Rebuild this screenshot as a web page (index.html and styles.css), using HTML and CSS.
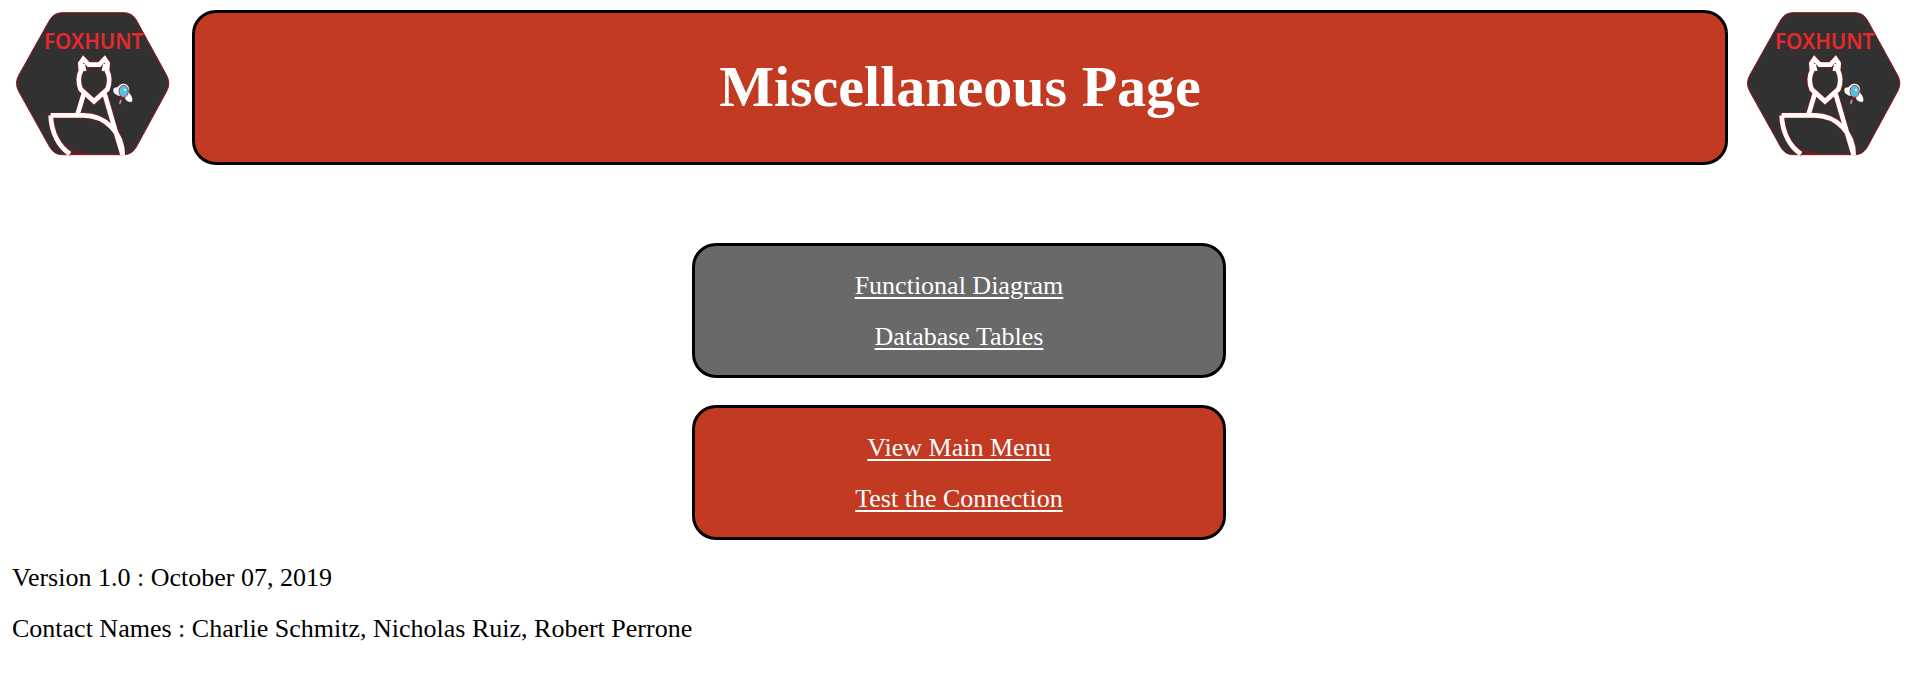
FILE: index.html
```
<!DOCTYPE html>
<html lang="en">
<head>
<meta charset="utf-8">
<title>Miscellaneous Page</title>
<link rel="stylesheet" href="styles.css">
</head>
<body>
<header class="header">
  <svg class="logo" viewBox="39 30 477 465" role="img" aria-label="Foxhunt">
    <path class="badge" d="M186 38H372Q396 38 409 60L500 226Q513 250 500 274L409 441Q396 464 372 464H186Q162 464 149 441L56 274Q43 250 56 226L149 60Q162 38 186 38Z"/>
    <g class="edge">
      <path d="M251 282L233 342M314 282L352 412L368 463M152 346H250C318 346 368 400 368 463M152 346C154 400 178 442 212 461"/>
      <path d="M250 178L241 190L243 212Q230 238 242 268L282 304L322 268Q334 238 321 212L323 190L314 178L298 194H266Z"/>
    </g>
    <g class="fox">
      <path d="M251 282L233 342M314 282L352 412L368 465M152 346H250C318 346 368 400 368 465M152 346C154 400 178 442 210 462"/>
      <path d="M250 177L241 190L243 212Q230 238 242 268L282 304L322 268Q334 238 321 212L323 190L314 177L298 194H266Z"/>
    </g>
    <path class="tail" d="M208 447Q232 462 266 463"/>
    <path class="ear" d="M250 192L255 213M314 192L309 213"/>
    <path class="moth" d="M371 250C358 250 356 260 351 261C337 259 335 276 345 283C355 291 362 288 373 290C374 303 387 309 397 306C400 298 398 289 388 278C391 261 384 252 371 250Z"/>
    <path class="handle" d="M366 291L358 315"/>
    <path class="grip" d="M363 300L359 311"/>
    <ellipse class="lens" cx="371" cy="274" rx="14" ry="18"/>
    <circle class="shine" cx="375" cy="270" r="4"/>
    <text class="wordmark" x="281" y="148" text-anchor="middle">FOXHUNT</text>
  </svg>
  <h1 class="banner">Miscellaneous Page</h1>
  <svg class="logo" viewBox="39 30 477 465" role="img" aria-label="Foxhunt">
    <path class="badge" d="M186 38H372Q396 38 409 60L500 226Q513 250 500 274L409 441Q396 464 372 464H186Q162 464 149 441L56 274Q43 250 56 226L149 60Q162 38 186 38Z"/>
    <g class="edge">
      <path d="M251 282L233 342M314 282L352 412L368 463M152 346H250C318 346 368 400 368 463M152 346C154 400 178 442 212 461"/>
      <path d="M250 178L241 190L243 212Q230 238 242 268L282 304L322 268Q334 238 321 212L323 190L314 178L298 194H266Z"/>
    </g>
    <g class="fox">
      <path d="M251 282L233 342M314 282L352 412L368 465M152 346H250C318 346 368 400 368 465M152 346C154 400 178 442 210 462"/>
      <path d="M250 177L241 190L243 212Q230 238 242 268L282 304L322 268Q334 238 321 212L323 190L314 177L298 194H266Z"/>
    </g>
    <path class="tail" d="M208 447Q232 462 266 463"/>
    <path class="ear" d="M250 192L255 213M314 192L309 213"/>
    <path class="moth" d="M371 250C358 250 356 260 351 261C337 259 335 276 345 283C355 291 362 288 373 290C374 303 387 309 397 306C400 298 398 289 388 278C391 261 384 252 371 250Z"/>
    <path class="handle" d="M366 291L358 315"/>
    <path class="grip" d="M363 300L359 311"/>
    <ellipse class="lens" cx="371" cy="274" rx="14" ry="18"/>
    <circle class="shine" cx="375" cy="270" r="4"/>
    <text class="wordmark" x="281" y="148" text-anchor="middle">FOXHUNT</text>
  </svg>
</header>
<main class="menus">
  <nav class="panel panel-gray" aria-label="Documents">
    <a href="#diagram">Functional Diagram</a>
    <a href="#tables">Database Tables</a>
  </nav>
  <nav class="panel panel-red" aria-label="Navigation">
    <a href="#menu">View Main Menu</a>
    <a href="#test">Test the Connection</a>
  </nav>
</main>
<footer class="footer">
  <p>Version 1.0 : October 07, 2019</p>
  <p>Contact Names : Charlie Schmitz, Nicholas Ruiz, Robert Perrone</p>
</footer>
</body>
</html>
```
FILE: styles.css
```
* { box-sizing: border-box; }
body {
  margin: 0;
  background: #fff;
  color: #000;
  font-family: "Liberation Serif", serif;
  font-size: 26px;
  line-height: 27px;
}
.header {
  display: flex;
  align-items: center;
  padding: 10px 15px 0 13px;
}
.logo {
  flex: none;
  width: 159px;
  height: 155px;
}
.banner {
  flex: 1;
  margin: 0 16px 0 20px;
  padding: 46px 16px 47px;
  border: 3px solid #000;
  border-radius: 24px;
  background: #c33a23;
  color: #fff;
  font-size: 58px;
  line-height: 56px;
  text-align: center;
}
.menus {
  display: flex;
  flex-direction: column;
  align-items: center;
  gap: 27px;
  padding-top: 78px;
}
.panel {
  display: flex;
  flex-direction: column;
  align-items: center;
  gap: 24px;
  width: 534px;
  max-width: 100%;
  padding: 26px 16px 25px;
  border: 3px solid #000;
  border-radius: 24px;
}
.panel-gray { background: #696969; }
.panel-red { background: #c33a23; }
.panel a {
  color: #fff;
  text-decoration-thickness: 2px;
  text-underline-offset: 3px;
}
.footer {
  display: flex;
  flex-direction: column;
  gap: 24px;
  padding: 24px 12px;
}
.footer p { margin: 0; }
.badge { fill: #313131; stroke: #9c1216; stroke-width: 3; }
.edge { fill: none; stroke: #9c1216; stroke-width: 18; }
.fox { fill: none; stroke: #fff; stroke-width: 14; }
.tail { fill: none; stroke: #9c1216; stroke-width: 3; }
.ear { fill: none; stroke: #fff; stroke-width: 9; }
.moth { fill: #fff; stroke: #161616; stroke-width: 2; }
.handle { fill: none; stroke: #9c1216; stroke-width: 8; }
.grip { fill: none; stroke: #4fc3e5; stroke-width: 5; }
.lens { fill: #4fc3e5; stroke: #b5393b; stroke-width: 3; }
.shine { fill: #b5edf8; }
.wordmark { fill: #e8282b; font-family: "Noto Sans", sans-serif; font-size: 62px; font-weight: 600; }
```
